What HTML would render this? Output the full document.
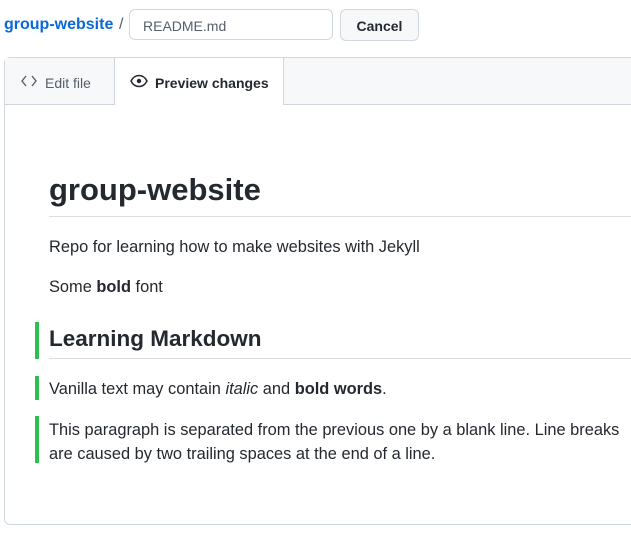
<!DOCTYPE html>
<html><head><style>
body{margin:0;width:631px;height:533px;overflow:hidden;background:#fff;font-family:"Liberation Sans",sans-serif;color:#24292f;position:relative}
.a{position:absolute}
.bar{position:absolute;left:35px;width:4px;background:#2cbe4e}
.p{font-size:16.4px}
</style></head><body>
<div class="a" style="left:4px;top:16px;font-size:16px;font-weight:bold;color:#0969da">group-website</div>
<div class="a" style="left:119px;top:16px;font-size:16px;color:#57606a">/</div>
<div class="a" style="left:129px;top:9px;width:204px;height:31px;border:1px solid #d0d7de;border-radius:6px;box-sizing:border-box;font-size:14px;color:#57606a;padding:8px 0 0 13px">README.md</div>
<div class="a" style="left:340px;top:9px;width:79px;height:32px;border:1px solid #d0d7de;border-radius:6px;box-sizing:border-box;background:#f6f8fa;font-size:14px;font-weight:bold;text-align:center;padding-top:8px">Cancel</div>
<div class="a" style="left:4px;top:57px;width:660px;height:468px;border:1px solid #d0d7de;border-radius:6px;box-sizing:border-box"></div>
<div class="a" style="left:5px;top:58px;width:640px;height:46px;background:#f6f8fa;border-bottom:1px solid #d0d7de"></div>
<div class="a" style="left:5px;top:58px;width:109px;height:46px;font-size:14px;color:#57606a">
<svg class="a" style="left:16px;top:17px" width="16" height="12" viewBox="0 0 16 12"><path d="M5 1L1 6l4 5M11 1l4 5-4 5" fill="none" stroke="#57606a" stroke-width="1.4"/></svg>
<span class="a" style="left:40px;top:17px">Edit file</span></div>
<div class="a" style="left:114px;top:58px;width:170px;height:47px;background:#fff;border-left:1px solid #d0d7de;border-right:1px solid #d0d7de;box-sizing:border-box;font-size:14px;font-weight:bold">
<svg class="a" style="left:15px;top:16px" width="18" height="14" viewBox="0 0 18 14"><path d="M1 7C3 3 6 1.5 9 1.5S15 3 17 7c-2 4-5 5.5-8 5.5S3 11 1 7z" fill="none" stroke="#24292f" stroke-width="1.5"/><circle cx="9" cy="7" r="2.2" fill="#24292f"/></svg>
<span class="a" style="left:40px;top:17px">Preview changes</span></div>
<div class="a" style="left:49px;top:172px;font-size:31px;font-weight:bold">group-website</div>
<div class="a" style="left:49px;top:216px;width:600px;height:1px;background:#d8dee4"></div>
<div class="a p" style="left:49px;top:238px">Repo for learning how to make websites with Jekyll</div>
<div class="a p" style="left:49px;top:278px">Some <b>bold</b> font</div>
<div class="bar" style="top:322px;height:37px"></div>
<div class="a" style="left:49px;top:326px;font-size:22.5px;font-weight:bold">Learning Markdown</div>
<div class="a" style="left:49px;top:358px;width:600px;height:1px;background:#d8dee4"></div>
<div class="bar" style="top:376px;height:24px"></div>
<div class="a p" style="left:49px;top:380px">Vanilla text may contain <i>italic</i> and <b>bold words</b>.</div>
<div class="bar" style="top:416px;height:47px"></div>
<div class="a p" style="left:49px;top:418px;line-height:24px;width:600px">This paragraph is separated from the previous one by a blank line. Line breaks<br>are caused by two trailing spaces at the end of a line.</div>
</body></html>
